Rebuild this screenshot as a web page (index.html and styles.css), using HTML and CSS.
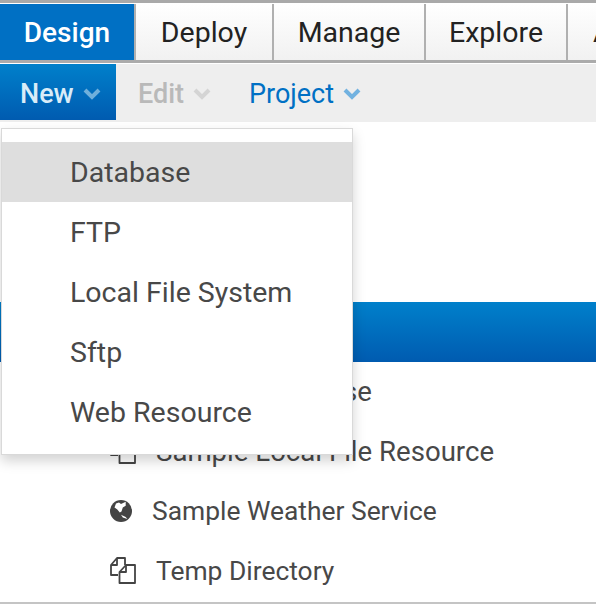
FILE: index.html
```html
<!DOCTYPE html>
<html lang="en">
<head>
  <meta charset="UTF-8">
  <meta name="viewport" content="width=device-width, initial-scale=1.0">
  <title>Design</title>
  <link rel="stylesheet" href="styles.css">
</head>
<body>

<div id="page">
  <div class="tabs">
    <div class="tab tab-active tab-design">Design</div>
    <div class="tab tab-deploy">Deploy</div>
    <div class="tab tab-manage">Manage</div>
    <div class="tab tab-explore">Explore</div>
    <div class="tab tab-more">Administer</div>
  </div>

  <div class="toolbar">
    <div class="tool tool-new">New
      <svg class="chevron" width="18" height="12" viewBox="0 0 18 12"><path d="M2 2l7 7 7-7" /></svg>
    </div>
    <div class="tool tool-edit">Edit
      <svg class="chevron" width="18" height="12" viewBox="0 0 18 12"><path d="M2 2l7 7 7-7" /></svg>
    </div>
    <div class="tool tool-project">Project
      <svg class="chevron" width="18" height="12" viewBox="0 0 18 12"><path d="M2 2l7 7 7-7" /></svg>
    </div>
  </div>

  <div class="content">
    <div class="section-bar"></div>
    <div class="list">
      <div class="row row-wide">
        <svg class="icon" width="28" height="28" viewBox="0 0 28 28"><use href="#files" /></svg>
        <span class="row-label">Sample Database</span>
      </div>
      <div class="row row-wide">
        <svg class="icon" width="28" height="28" viewBox="0 0 28 28"><use href="#files" /></svg>
        <span class="row-label">Sample Local File Resource</span>
      </div>
      <div class="row row-globe">
        <svg class="icon" width="28" height="28" viewBox="0 0 28 28">
          <circle cx="12" cy="14" r="11" fill="#444" />
          <path d="M7 6.500L10 5.500L12 7L16.700 4.800V8.700L13.800 10.500L12.500 14.500L10.800 15.500L8.300 12.500L5.500 10.500z" fill="#fff" />
          <path d="M12 17.700L16.700 20L18.300 22L13.800 20.500z" fill="#fff" />
        </svg>
        <span class="row-label">Sample Weather Service</span>
      </div>
      <div class="row">
        <svg class="icon" width="28" height="28" viewBox="0 0 28 28"><use href="#files" /></svg>
        <span class="row-label">Temp Directory</span>
      </div>
    </div>
  </div>

  <div class="menu">
    <div class="menu-item menu-item-hover">Database</div>
    <div class="menu-item">FTP</div>
    <div class="menu-item">Local File System</div>
    <div class="menu-item">Sftp</div>
    <div class="menu-item">Web Resource</div>
  </div>
</div>

<svg class="defs" width="0" height="0">
  <symbol id="files" viewBox="0 0 28 28">
    <g fill="none" stroke="#444" stroke-width="1.8" stroke-linejoin="round">
      <path d="M9 18H2V8l6-7h8v7" />
      <path d="M8 1v7H2" />
      <path d="M10.500 26H26V8H17l-6.500 7z" fill="#fff" />
      <path d="M17 8v7h-6.500" />
    </g>
  </symbol>
</svg>

</body>
</html>
```

FILE: styles.css
```css
body {
  margin: 0;
  font-family: Roboto, "Liberation Sans", sans-serif;
  background-color: #fff;
  overflow: hidden;
}

#page {
  position: relative;
  width: 596px;
  height: 614px;
  overflow: hidden;
}

.defs {
  position: absolute;
}

.tabs {
  display: flex;
  height: 56px;
  padding-top: 1px;
  border-top: 3px solid #a9a9a9;
  border-bottom: 3px solid #ababab;
  background: linear-gradient(#fff, #f1f1f1);
}

.tab {
  display: flex;
  flex-shrink: 0;
  align-items: center;
  justify-content: center;
  box-sizing: border-box;
  border-right: 2px solid #b0b0b0;
  font-size: 28.5px;
  color: #222;
}

.tab-active {
  background-color: #0070c4;
  color: #fff;
  font-size: 28px;
  font-weight: 500;
}

.tab-design { width: 136px; }
.tab-deploy { width: 138px; }
.tab-manage { width: 152px; }
.tab-explore { width: 142px; }
.tab-more { width: 160px; justify-content: flex-start; padding-left: 25px; border-right: 0; }

.toolbar {
  display: flex;
  height: 58px;
  margin-top: 1px;
  background-color: #eee;
}

.tool {
  display: flex;
  align-items: center;
  gap: 9px;
  box-sizing: border-box;
  height: 56px;
  padding-top: 3px;
  font-size: 27px;
  font-weight: 500;
}

.chevron path {
  fill: none;
  stroke: currentColor;
  stroke-width: 4;
}

.tool-new {
  width: 116px;
  padding-left: 20px;
  background: linear-gradient(#0080cb, #005bb0);
  color: #d9ecf8;
}

.tool-new .chevron { color: #6fb0dc; }

.tool-edit {
  width: 133px;
  padding-left: 22px;
  color: #b9b9b9;
}

.tool-edit .chevron { color: #d4d4d4; }

.tool-project {
  color: #0070c4;
  font-weight: 400;
}

.tool-project .chevron { color: #72b2e0; }

.content {
  padding-top: 180px;
}

.section-bar {
  height: 60px;
  background: linear-gradient(#0080cb, #005bb0);
}

.list {
  border-bottom: 2px solid #c4c4c4;
}

.row {
  display: flex;
  align-items: center;
  gap: 19px;
  box-sizing: border-box;
  height: 60px;
  padding-left: 109px;
  padding-bottom: 2px;
  font-size: 26.4px;
  color: #484848;
}

.row-wide {
  font-size: 27.6px;
}

.row-globe {
  gap: 15px;
}

.menu {
  position: absolute;
  left: 1px;
  top: 128px;
  width: 352px;
  height: 327px;
  box-sizing: border-box;
  padding: 13px 0;
  background-color: #fff;
  border: 1px solid rgba(0, 0, 0, 0.15);
  box-shadow: 0 6px 12px rgba(0, 0, 0, 0.175);
}

.menu-item {
  display: flex;
  align-items: center;
  height: 60px;
  padding-left: 68px;
  font-size: 28.5px;
  color: #484848;
}

.menu-item-hover {
  background-color: #dedede;
}
```
